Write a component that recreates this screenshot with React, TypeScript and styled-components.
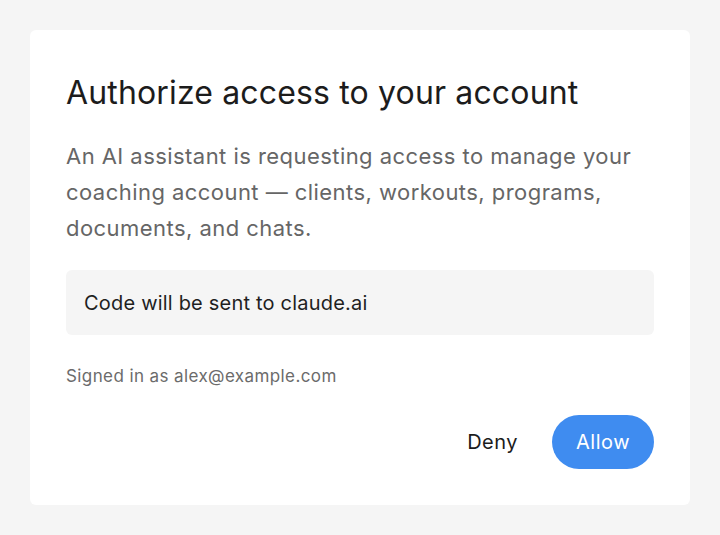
import React from "react"
import styled, { createGlobalStyle } from "styled-components"

const GlobalStyle = createGlobalStyle`
  html, body {
    margin: 0;
    padding: 0;
    background: #f5f5f5;
    font-family: Inter, "Noto Sans", "Liberation Sans", sans-serif;
  }
`

const Page = styled.div`
  padding: 30px;
  min-height: 535px;
  box-sizing: border-box;
`

const Card = styled.div`
  background: #ffffff;
  border-radius: 6px;
  padding: 43px 36px 36px;
  display: flex;
  flex-direction: column;
`

const Title = styled.h1`
  margin: 0;
  font-size: 32px;
  font-weight: 400;
  line-height: 40px;
  color: #1c1c1c;
  letter-spacing: 0.15px;
`

const Description = styled.p`
  margin: 25px 0 0;
  font-size: 22px;
  line-height: 36px;
  color: #666666;
  letter-spacing: 0.45px;
`

const CodeBox = styled.div`
  margin-top: 24px;
  background: #f5f5f5;
  border-radius: 6px;
  padding: 0 18px;
  height: 65px;
  display: flex;
  align-items: center;
  font-size: 20px;
  color: #1f1f1f;
  letter-spacing: 0.2px;
`

const SignedIn = styled.div`
  margin-top: 30px;
  font-size: 17px;
  line-height: 22px;
  color: #6b6b6b;
  letter-spacing: 0.4px;
`

const Actions = styled.div`
  margin-top: 28px;
  display: flex;
  justify-content: flex-end;
  align-items: center;
  gap: 18px;
`

const Button = styled.button<{ $primary?: boolean }>`
  font-family: inherit;
  font-size: 20px;
  height: 54px;
  border: none;
  border-radius: 27px;
  padding: 0 ${p => (p.$primary ? "24px" : "16px")};
  background: ${p => (p.$primary ? "#3f8cf0" : "transparent")};
  color: ${p => (p.$primary ? "#ffffff" : "#1c1c1c")};
  letter-spacing: 0.5px;
  cursor: pointer;
`

export default function App() {
  return (
    <Page>
      <GlobalStyle />
      <Card>
        <Title>Authorize access to your account</Title>
        <Description>
          An AI assistant is requesting access to manage your coaching account
          — clients, workouts, programs, documents, and chats.
        </Description>
        <CodeBox>Code will be sent to claude.ai</CodeBox>
        <SignedIn>Signed in as alex@example.com</SignedIn>
        <Actions>
          <Button>Deny</Button>
          <Button $primary>Allow</Button>
        </Actions>
      </Card>
    </Page>
  )
}
